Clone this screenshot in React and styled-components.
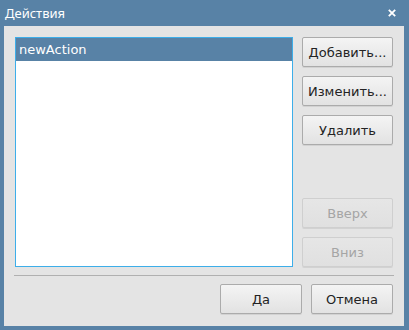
import styled, { createGlobalStyle } from "styled-components";

const GlobalStyle = createGlobalStyle`
  html, body {
    margin: 0;
    padding: 0;
    background: #5882a6;
  }
  body {
    font-family: "DejaVu Sans", sans-serif;
    font-size: 13px;
  }
`;

const Window = styled.div`
  width: 409px;
  height: 330px;
  display: flex;
  flex-direction: column;
  background: #5882a6;
  box-sizing: border-box;
`;

const TitleBar = styled.div`
  height: 26px;
  display: flex;
  align-items: center;
  justify-content: space-between;
  padding: 0 13px 0 5px;
  color: #ffffff;
  font-family: "Noto Sans", sans-serif;
  font-size: 13px;
  flex-shrink: 0;
`;

const CloseButton = styled.svg`
  width: 8px;
  height: 8px;
  display: block;
`;

const Body = styled.div`
  flex: 1;
  margin: 0 5px 4px 4px;
  background: #e4e4e4;
  padding: 11px 11px 12px 11px;
  display: flex;
  flex-direction: column;
`;

const MainRow = styled.div`
  display: flex;
  gap: 9px;
  height: 230px;
`;

const List = styled.div`
  flex: 1;
  background: #ffffff;
  border: 1px solid #3daee9;
  display: flex;
  flex-direction: column;
`;

const ListItem = styled.div`
  height: 23px;
  display: flex;
  align-items: center;
  padding-left: 3px;
  background: ${(p) => (p.$selected ? "#5882a6" : "transparent")};
  color: ${(p) => (p.$selected ? "#ffffff" : "#222222")};
`;

const SideColumn = styled.div`
  width: 91px;
  display: flex;
  flex-direction: column;
  gap: 9px;
`;

const Spacer = styled.div`
  flex: 1;
`;

const Button = styled.button`
  width: ${(p) => p.$width || "100%"};
  height: 30px;
  box-sizing: border-box;
  font-family: "DejaVu Sans", sans-serif;
  font-size: 13px;
  color: ${(p) => (p.disabled ? "#a5a5a5" : "#232323")};
  background: ${(p) =>
    p.disabled
      ? "linear-gradient(#e6e6e6, #e0e0e0)"
      : "linear-gradient(#f4f4f4, #e2e2e2)"};
  border: 1px solid ${(p) => (p.disabled ? "#cfcfcf" : "#ababab")};
  border-radius: 2px;
  box-shadow: 0 1px 0 rgba(0, 0, 0, 0.08);
  padding: 0;
  flex-shrink: 0;
`;

const Separator = styled.div`
  height: 1px;
  background: #b0b0b0;
  margin: 8px 0 8px -1px;
  width: calc(100% + 2px);
`;

const Footer = styled.div`
  display: flex;
  justify-content: flex-end;
  gap: 9px;
`;

export default function App() {
  return (
    <>
      <GlobalStyle />
      <Window>
        <TitleBar>
          <span>Действия</span>
          <CloseButton viewBox="0 0 8 8">
            <path d="M0.8 0.8 L7.2 7.2 M7.2 0.8 L0.8 7.2" stroke="#ffffff" strokeWidth="1.8" />
          </CloseButton>
        </TitleBar>
        <Body>
          <MainRow>
            <List>
              <ListItem $selected>newAction</ListItem>
            </List>
            <SideColumn>
              <Button>Добавить...</Button>
              <Button>Изменить...</Button>
              <Button>Удалить</Button>
              <Spacer />
              <Button disabled>Вверх</Button>
              <Button disabled>Вниз</Button>
            </SideColumn>
          </MainRow>
          <Separator />
          <Footer>
            <Button $width="82px">Да</Button>
            <Button $width="82px">Отмена</Button>
          </Footer>
        </Body>
      </Window>
    </>
  );
}
